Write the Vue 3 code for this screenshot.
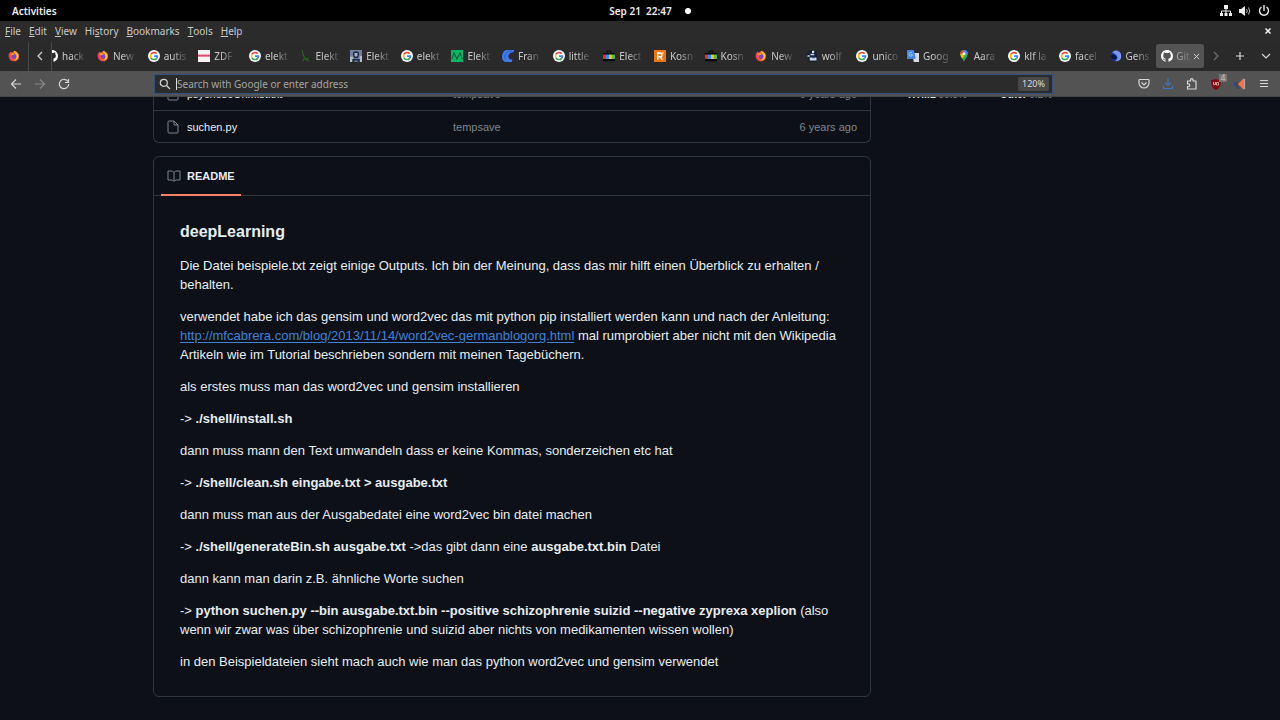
<script setup>
const menus = [
  ['F', 'ile', ''], ['E', 'dit', ''], ['V', 'iew', ''], ['s', 'tory', 'Hi'],
  ['B', 'ookmarks', ''], ['T', 'ools', ''], ['H', 'elp', ''],
]
const tabs = [
  ['firefox', 'New'], ['google', 'autis'], ['zdf', 'ZDF'], ['google', 'elekt'],
  ['plant', 'Elekt'], ['photo', 'Elekt'], ['google', 'elekt'], ['wave', 'Elekt'],
  ['fran', 'Fran'], ['google', 'little'], ['bag', 'Elect'], ['r', 'Kosn'],
  ['bag', 'Kosn'], ['firefox', 'New'], ['wolf', 'wolf'], ['google', 'unico'],
  ['translate', 'Goog'], ['maps', 'Aara'], ['google', 'klf la'], ['google', 'facel'],
  ['moon', 'Gens'],
]
</script>

<template>
  <div class="desktop">
    <svg class="symbols" aria-hidden="true">
      <symbol id="firefox" viewBox="0 0 16 16">
        <path fill="#ff5a36" d="M1 8C1 5 2.500 3 4 2l1 2 2-2c2-1 3-1 4 0l1 1 1 2 1-.5C16 9 14 15 8 15c-4 0-7-3-7-7z" />
        <path fill="#ffbd2e" d="M8 1c3 1 6 3 6 7 0 4-3 6-6 6 3-2 4-5 2-8C9 4 8 3 8 1z" />
        <path fill="#ef327d" d="M1 7c0 5 4 8 8 7.500C6 14 3 12 3 8L1 4z" />
        <circle cx="8" cy="8.500" r="3.200" fill="#8240c8" />
        <path fill="#ffb02e" d="M4 5c2-1 4-.5 5 1-2 0-3 1-4 1z" />
      </symbol>
      <symbol id="google" viewBox="0 0 16 16">
        <circle cx="8" cy="8" r="8" fill="#fff" />
        <g fill="none" stroke-width="2.200">
          <path stroke="#ea4335" d="M4 5.700A4.700 4.700 0 0 1 11.500 4.800" />
          <path stroke="#fbbc05" d="M4 5.700a4.700 4.700 0 0 0 0 4.700" />
          <path stroke="#34a853" d="M4 10.400a4.700 4.700 0 0 0 7.300 1" />
          <path stroke="#4285f4" d="M8 8.200h4.600a4.700 4.700 0 0 1-1.400 3.200" />
        </g>
      </symbol>
      <symbol id="zdf" viewBox="0 0 16 16">
        <path fill="#f5f2f4" d="M0 0h16v16H0z" /><path fill="#e86a86" d="M0 6h16v3H0z" />
        <path stroke="#c22a52" stroke-dasharray="2 1" d="M1 7.500h14" />
      </symbol>
      <symbol id="plant" viewBox="0 0 16 16">
        <path d="M3 0c0 5 2 9 4 12l5 3M6 10l-2 5M7 12l5-1" fill="none" stroke="#28651f" stroke-width="1.500" />
      </symbol>
      <symbol id="photo" viewBox="0 0 16 16">
        <path fill="#71809e" d="M0 0h16v16H0z" /><path fill="#b5bdcc" d="M0 9h4v7H0zM13 8h3v8h-3z" />
        <path fill="#202b4a" d="M4 3q4-3 8 0v5l-2 3H6L4 8zM3 12h10v4h-3v-2H6v2H3z" /><path fill="#a9b0c0" d="M6 4h4v4l-2 1-2-1z" />
      </symbol>
      <symbol id="wave" viewBox="0 0 16 16">
        <path fill="#0cb565" d="M0 0h16v16H0z" />
        <path d="M1 12 4 4l4 8 4-8 3 8" fill="none" stroke="#0a5c38" stroke-width="1.500" />
      </symbol>
      <symbol id="fran" viewBox="0 0 16 16">
        <path fill="#3f7af0" d="M5 0h11l-1 3-4 1-3 4 2 4 4 1-1 3H5C2 16 0 13 0 9c0-4 2-8 5-9z" />
        <path d="M13 1 8 2 4 7v5" fill="none" stroke="#2450b4" />
      </symbol>
      <symbol id="bag" viewBox="0 0 16 16">
        <path fill="#050505" d="M0 4h5V1h6v3h5v11H0zM6 2v2h4V2z" /><path fill="#e63131" d="M0 6h4v6H0z" />
        <path fill="#358de5" d="M4 6h4v6H4z" /><path fill="#edc22d" d="M8 6h4v6H8z" /><path fill="#60b640" d="M12 6h4v6h-4z" />
      </symbol>
      <symbol id="r" viewBox="0 0 16 16">
        <path fill="#e87516" d="M0 0h16v16H0z" />
        <path d="M5 13V4h3a2 2 0 0 1 0 5H5m3 0 3 4" fill="none" stroke="#fff" stroke-width="1.800" /><circle cx="12" cy="4" r="1" fill="#fff" />
      </symbol>
      <symbol id="wolf" viewBox="0 0 16 16">
        <path fill="#101c38" d="M4 1h10v5l1 3v5l-3 2H3V8H1V5h4z" />
        <path fill="#d3dbea" d="M8 1h3v3H8zM6 5h5v2H6zM2 7h3v2H2zM5 10h9v4H5z" /><path fill="#3a5483" d="M8 9h4v2H8z" />
      </symbol>
      <symbol id="translate" viewBox="0 0 16 16">
        <path fill="#d8dce2" d="M7 4h9v12H9z" /><path fill="#4486e8" d="M0 0h9l3 12H0z" />
        <path d="M7 4a2.500 2.500 0 1 0 0 3.500V6H5m6 2h4m-2 0-2 5" fill="none" stroke="#c7dcff" />
      </symbol>
      <symbol id="maps" viewBox="0 0 16 16">
        <path fill="#34a853" d="M3 5a5 5 0 0 1 10 0c0 5-4 6-5 11-1-4-5-6-5-11z" />
        <path fill="#4285f4" d="M8 0a5 5 0 0 1 5 5L9 6z" /><path fill="#ea4335" d="M8 0a5 5 0 0 0-5 5l3 2z" />
        <path fill="#fbbc04" d="m3 6 3-2 2 5-3 2z" /><circle cx="8" cy="5" r="2" fill="#fff" />
      </symbol>
      <symbol id="moon" viewBox="0 0 16 16">
        <circle cx="8" cy="8" r="7" fill="#173aa7" /><path fill="#7794ef" d="M3 3c5-5 12-1 12 5s-4 7-8 7c6-5 2-9-4-12z" />
        <path fill="#061448" d="M1 8c2-4 7-1 8 2-2 4-7 4-8-2z" />
      </symbol>
      <symbol id="github" viewBox="0 0 16 16">
        <path fill="#fff" d="M8 0C3.580 0 0 3.580 0 8c0 3.540 2.290 6.530 5.470 7.590.4.07.55-.17.55-.38 0-.19-.01-.82-.01-1.490-2.010.37-2.530-.49-2.690-.94-.09-.23-.48-.94-.82-1.130-.28-.15-.68-.52-.01-.53.63-.01 1.080.58 1.230.82.72 1.210 1.870.87 2.330.66.07-.52.28-.87.51-1.070-1.780-.2-3.640-.89-3.640-3.950 0-.87.31-1.590.82-2.150-.08-.2-.36-1.020.08-2.120 0 0 .67-.21 2.200.82.64-.18 1.320-.27 2-.27s1.360.09 2 .27c1.530-1.040 2.200-.82 2.200-.82.44 1.100.16 1.920.08 2.120.51.56.82 1.270.82 2.150 0 3.070-1.870 3.750-3.650 3.950.29.25.54.73.54 1.480 0 1.070-.01 1.930-.01 2.200 0 .21.15.46.55.38A8.010 8.010 0 0 0 16 8c0-4.420-3.580-8-8-8z" />
      </symbol>
    </svg>

    <header class="topbar">
      <button class="activities">Activities</button>
      <button class="clock">Sep 21&nbsp; 22:47<i class="dot"></i></button>
      <button class="status" aria-label="System menu">
        <svg viewBox="0 0 12 12"><path d="M4 0h4v4H4zM0 8h3v3H0zM4.500 8h3v3h-3zM9 8h3v3H9z" fill="#eee" /><path d="M6 3v5M1.500 9V6h9v3" fill="none" stroke="#eee" /></svg>
        <svg viewBox="0 0 12 12"><path d="M0 4h2l4-3v10L2 8H0z" fill="#eee" /><path d="M7.500 4q1.500 2 0 4M9.500 2.500q2.500 3.500 0 7" fill="none" stroke="#bbb" /></svg>
        <svg viewBox="0 0 12 12"><path d="M3.500 2a4.500 4.500 0 1 0 5 0M6 0v6" fill="none" stroke="#eee" stroke-width="1.400" /></svg>
      </button>
    </header>

    <nav class="menubar">
      <button v-for="m in menus" :key="m[0]">{{ m[2] }}<u>{{ m[0] }}</u>{{ m[1] }}</button>
      <button class="close" aria-label="Close window"><svg viewBox="0 0 8 8"><path d="m1.500 1.500 5 5m0-5-5 5" stroke="#f2f2f2" stroke-width="1.500" /></svg></button>
    </nav>

    <div class="tabstrip">
      <button class="pinned" aria-label="Pinned tab"><svg><use href="#firefox" /></svg></button>
      <button class="scroll" aria-label="Scroll left"><svg viewBox="0 0 12 12"><path d="M8 2 4 6l4 4" /></svg></button>
      <div class="tabs">
        <button class="tab first"><svg><use href="#github" /></svg><span>hack</span></button>
        <button v-for="(t, i) in tabs" :key="i" class="tab"><svg><use :href="'#' + t[0]" /></svg><span>{{ t[1] }}</span></button>
        <button class="tab active"><svg><use href="#github" /></svg><span>Git</span><svg class="x" viewBox="0 0 8 8"><path d="m1 1 6 6m0-6-6 6" stroke="#ddd" /></svg></button>
      </div>
      <div class="tabtools">
        <button class="dim" aria-label="Scroll right"><svg viewBox="0 0 12 12"><path d="m4 2 4 4-4 4" /></svg></button>
        <button aria-label="New tab"><svg viewBox="0 0 12 12"><path d="M6 2v8M2 6h8" /></svg></button>
        <button aria-label="List all tabs"><svg viewBox="0 0 12 12"><path d="m2 4 4 4 4-4" /></svg></button>
      </div>
    </div>

    <div class="toolbar">
      <div class="navs">
        <button aria-label="Back"><svg viewBox="0 0 12 12"><path d="M11 6H1.500M6 1.500 1.500 6 6 10.500" /></svg></button>
        <button class="dim" aria-label="Forward"><svg viewBox="0 0 12 12"><path d="M1 6h9.500M6 1.500 10.500 6 6 10.500" /></svg></button>
        <button aria-label="Reload"><svg viewBox="0 0 12 12"><path d="M10 3.500A4.700 4.700 0 1 0 10.700 6M10.500 1v3.500H7" /></svg></button>
      </div>
      <div class="urlbar">
        <svg viewBox="0 0 12 12"><circle cx="4.800" cy="4.800" r="3.500" /><path d="m7.500 7.500 3.500 3.500" /></svg>
        <i class="caret"></i>
        <input aria-label="Address" placeholder="Search with Google or enter address">
        <button class="zoom">120%</button>
      </div>
      <div class="actions">
        <button aria-label="Pocket"><svg viewBox="0 0 12 12"><path d="M1.500 1.500h9a1 1 0 0 1 .5 1V5A5 5 0 0 1 1 5V2.500a1 1 0 0 1 .5-1zM3.500 4.500 6 7l2.500-2.500" /></svg></button>
        <button aria-label="Downloads"><svg class="blue" viewBox="0 0 12 12"><path d="M6 0v7M3 4.500l3 3 3-3M1.500 8v2.500h9V8" /></svg></button>
        <button aria-label="Extensions"><svg viewBox="0 0 12 12"><path d="M1.500 3h3V2a1.300 1.300 0 0 1 2.600 0v1H10v8H1.500V8.500h1a1.300 1.300 0 0 0 0-2.600h-1z" /></svg></button>
        <button class="shield" aria-label="Content blocker"><svg viewBox="0 0 12 12"><path fill="#800b12" stroke="none" d="M6 1q2 1 5 1c0 5-1 8-5 10C2 10 1 7 1 2q3 0 5-1z" /><path stroke="#e8bcbc" stroke-width=".8" d="M3.500 4v2.500h2V4m1 3V4.500h2V7h-2" /></svg><b>4</b></button>
        <button aria-label="Announcements"><svg viewBox="0 0 12 12"><path fill="#ff7043" stroke="none" d="M4 6 10 0v12z" /><path fill="#33476f" stroke="none" d="M0 4h4v4l2 3H3L2 8H0z" /><path stroke="#a9a9a9" d="M10.500 1v10" /></svg></button>
        <button aria-label="Menu"><svg viewBox="0 0 12 12"><path d="M2 2.500h8M2 5.500h8M2 8.500h8" /></svg></button>
      </div>
    </div>

    <div class="viewport">
      <div class="page">
        <main>
          <table class="files">
            <colgroup><col class="name"><col><col class="age"></colgroup>
            <tbody>
              <tr><td><div class="entry"><svg class="file" viewBox="0 0 12 14"><path d="M2 1h5l4 4v7q0 1-1 1H2q-1 0-1-1V2q0-1 1-1zM7 1v4h4" /></svg><a href="#">psychoseUnMist.txt</a></div></td><td>tempsave</td><td>6 years ago</td></tr>
              <tr><td><div class="entry"><svg class="file" viewBox="0 0 12 14"><path d="M2 1h5l4 4v7q0 1-1 1H2q-1 0-1-1V2q0-1 1-1zM7 1v4h4" /></svg><a href="#">suchen.py</a></div></td><td>tempsave</td><td>6 years ago</td></tr>
            </tbody>
          </table>
          <section class="readme">
            <nav><a href="#readme"><svg viewBox="0 0 14 12"><path d="M7 2.500Q6 1 4 1H1v9h3.500Q6 10 7 11.500 8 10 9.500 10H13V1h-3Q8 1 7 2.500zm0 0v8.500" /></svg>README</a></nav>
            <article id="readme">
              <h1>deepLearning</h1>
              <p>Die Datei beispiele.txt zeigt einige Outputs. Ich bin der Meinung, dass das mir hilft einen Überblick zu erhalten / behalten.</p>
              <p>verwendet habe ich das gensim und word2vec das mit python pip installiert werden kann und nach der Anleitung: <a href="#">http://mfcabrera.com/blog/2013/11/14/word2vec-germanblogorg.html</a> mal rumprobiert aber nicht mit den Wikipedia Artikeln wie im Tutorial beschrieben sondern mit meinen Tagebüchern.</p>
              <p>als erstes muss man das word2vec und gensim installieren</p>
              <p>-&gt; <b>./shell/install.sh</b></p>
              <p>dann muss mann den Text umwandeln dass er keine Kommas, sonderzeichen etc hat</p>
              <p>-&gt; <b>./shell/clean.sh eingabe.txt &gt; ausgabe.txt</b></p>
              <p>dann muss man aus der Ausgabedatei eine word2vec bin datei machen</p>
              <p>-&gt; <b>./shell/generateBin.sh ausgabe.txt</b> -&gt;das gibt dann eine <b>ausgabe.txt.bin</b> Datei</p>
              <p>dann kann man darin z.B. ähnliche Worte suchen</p>
              <p>-&gt; <b>python suchen.py --bin ausgabe.txt.bin --positive schizophrenie suizid --negative zyprexa xeplion</b> (also wenn wir zwar was über schizophrenie und suizid aber nichts von medikamenten wissen wollen)</p>
              <p>in den Beispieldateien sieht mach auch wie man das python word2vec und gensim verwendet</p>
            </article>
          </section>
        </main>
        <aside>
          <span><i class="html"></i><b>HTML</b> 80.8%</span>
          <span><i></i><b>Other</b> 0.2%</span>
        </aside>
      </div>
    </div>
  </div>
</template>

<style>
html, body { margin: 0; background: #0d1117; }
</style>

<style scoped>
* { box-sizing: border-box; }
.desktop { height: 100vh; display: flex; flex-direction: column; overflow: hidden; font: 10px/16px "Noto Sans", "Open Sans", sans-serif; color: #c9c9c9; }
button { border: 0; padding: 0; margin: 0; background: none; color: inherit; font: inherit; display: flex; align-items: center; justify-content: center; flex: none; }
svg { width: 12px; height: 12px; fill: none; stroke: none; flex: none; display: block; }
.symbols { width: 0; height: 0; position: absolute; }
.topbar { height: 21px; flex: none; background: #000; display: grid; grid-template-columns: 1fr auto 1fr; align-items: center; padding: 0 10px 0 12px; color: #eee; font-weight: 600; }
.activities { justify-self: start; }
.clock { gap: 13px; padding-left: 18px; }
.dot { width: 6px; height: 6px; border-radius: 3px; background: #fff; }
.status { justify-self: end; gap: 7px; }
.menubar { height: 21px; flex: none; background: #2b2b2b; display: flex; align-items: center; padding: 0 8px 1px 5px; gap: 8px; }
.close { margin-left: auto; }
.close svg { width: 8px; height: 8px; }
.tabstrip { height: 29px; flex: none; background: #2a2a2a; display: flex; }
.pinned { width: 29px; border-right: 1px solid #4a4a4a; padding-right: 1px; }
.scroll { width: 23px; border-right: 1px solid #4a4a4a; }
.scroll svg, .tabtools svg, .toolbar svg { stroke: #d6d6d6; stroke-width: 1.2; }
.tabs { flex: 1; min-width: 0; display: flex; align-items: center; overflow: hidden; padding-bottom: 1px; }
.tab { flex: 1 1 0; min-width: 0; height: 24px; padding: 0 0 0 7px; gap: 4px; justify-content: flex-start; }
.tab span { white-space: nowrap; mask-image: linear-gradient(90deg, #000 40%, #0003); }
.tab.first { flex: 0 0 38px; padding: 0; }
.tab.first svg { margin-left: -6px; }
.tab.active { flex: 0 0 48px; margin-left: 3px; background: #545454; border-radius: 3px; padding: 0 7px 0 5px; gap: 3px; }
.tab.active span { flex: 1; text-align: left; mask-image: linear-gradient(90deg, #000c, #0003); }
.tab.active .x { width: 7px; height: 7px; }
.tabtools { display: grid; grid-template-columns: 24px 24px 28px; flex: none; }
.pinned svg, .scroll svg, .tabtools svg { margin-bottom: 1px; }
.dim { opacity: .4; }
.toolbar { height: 26px; flex: none; background: #535353; display: flex; align-items: center; padding: 0 10px; border-bottom: 1px solid #454545; }
.navs { display: flex; gap: 12px; flex: 1 1 144px; }
.urlbar { flex: 1 1 899px; height: 20px; border: 1px solid #30537e; background: #2b2b2b; display: flex; align-items: center; padding: 0 3px 0 4px; }
.caret { width: 1px; height: 12px; background: #ddd; margin-left: 5px; }
.urlbar input { flex: 1; min-width: 0; padding: 0; border: 0; outline: 0; background: none; font: inherit; color: #ddd; }
.urlbar input::placeholder { color: #a5a5a5; opacity: 1; }
.zoom { background: #484848; padding: 0 4px; height: 14px; border-radius: 2px; font-size: 9px; color: #ddd; }
.actions { display: flex; gap: 12px; flex: 1 1 217px; justify-content: flex-end; }
.toolbar .blue { stroke: #4175b5; }
.shield { position: relative; }
.shield b { position: absolute; top: -4px; right: -5px; width: 8px; background: #777; font-size: 8px; line-height: 8px; font-weight: 400; }
.viewport { flex: 1; min-height: 0; overflow: hidden; background: #0d1117; font-family: "Liberation Sans", Arial, sans-serif; font-size: 11px; }
.page { max-width: 974px; margin: -19px auto 0; display: grid; grid-template-columns: 1fr 237px; gap: 19px; }
.files { width: 100%; table-layout: fixed; border-collapse: separate; border-spacing: 0; border: 1px solid #30363d; border-top: 0; border-radius: 0 0 6px 6px; color: #7d8590; }
.name { width: 286px; }
.age { width: 120px; }
.files td { height: 32px; padding: 0 13px; }
.files tr + tr td { border-top: 1px solid #30363d; }
.files td:last-child { text-align: right; }
.entry { display: flex; align-items: center; gap: 8px; }
.files a { color: #e6edf3; text-decoration: none; }
.file, .readme nav svg { stroke: #7d8590; }
.file { height: 14px; }
.readme { margin-top: 13px; border: 1px solid #30363d; border-radius: 6px; color: #e6edf3; }
.readme nav { height: 39px; border-bottom: 1px solid #30363d; padding-left: 7px; display: flex; }
.readme nav a { display: flex; align-items: center; gap: 6px; height: 39px; padding: 0 6px; border-bottom: 2px solid #f78166; color: inherit; text-decoration: none; font-weight: 700; }
.readme nav svg { width: 14px; }
article { padding: 26px 26px 25px; font-size: 13px; line-height: 19px; }
article h1 { margin: 0 0 14px; font-size: 16px; line-height: 20px; }
article p { margin: 0 0 13px; }
article p:last-child { margin: 0; }
article a { color: #3f82d6; text-underline-offset: 2px; }
aside { display: flex; align-items: flex-start; gap: 18px; padding: 9px 0 0 3px; color: #7d8590; font-size: 10px; }
aside b { color: #e6edf3; }
aside i { display: inline-block; width: 6px; height: 6px; border-radius: 3px; background: #ededed; margin: 0 9px 2px 0; }
aside .html { background: #e34c26; }
</style>
